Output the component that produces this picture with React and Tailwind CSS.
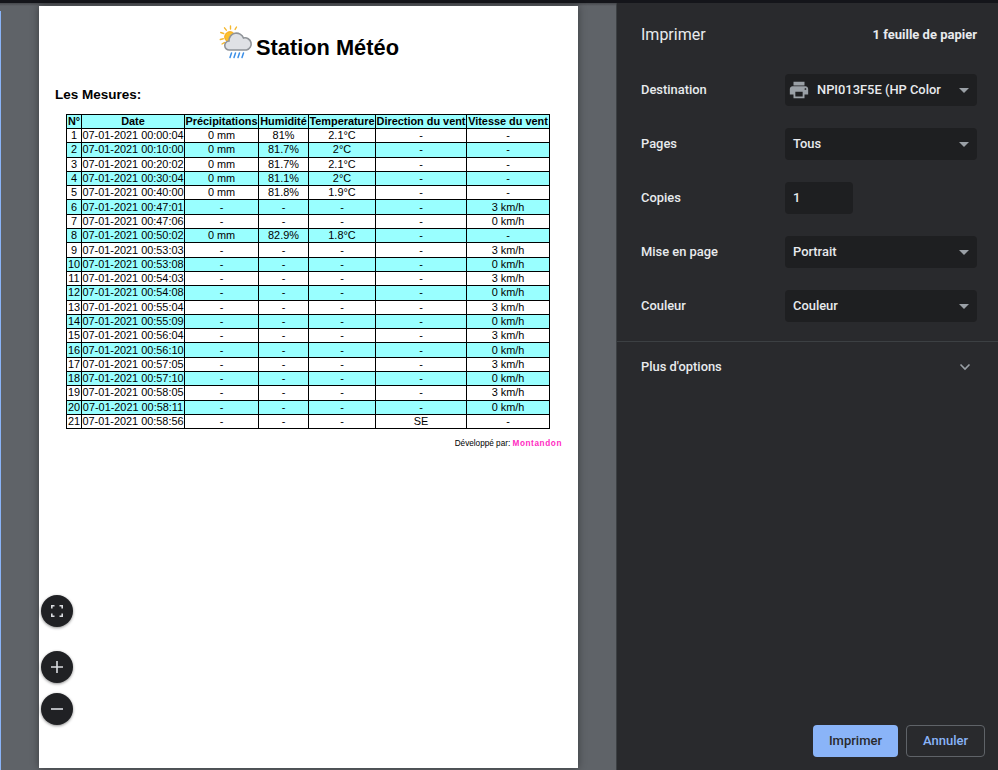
const rows = [
["07-01-2021 00:00:04","0 mm","81%","2.1°C","-","-"],
["07-01-2021 00:10:00","0 mm","81.7%","2°C","-","-"],
["07-01-2021 00:20:02","0 mm","81.7%","2.1°C","-","-"],
["07-01-2021 00:30:04","0 mm","81.1%","2°C","-","-"],
["07-01-2021 00:40:00","0 mm","81.8%","1.9°C","-","-"],
["07-01-2021 00:47:01","-","-","-","-","3 km/h"],
["07-01-2021 00:47:06","-","-","-","-","0 km/h"],
["07-01-2021 00:50:02","0 mm","82.9%","1.8°C","-","-"],
["07-01-2021 00:53:03","-","-","-","-","3 km/h"],
["07-01-2021 00:53:08","-","-","-","-","0 km/h"],
["07-01-2021 00:54:03","-","-","-","-","3 km/h"],
["07-01-2021 00:54:08","-","-","-","-","0 km/h"],
["07-01-2021 00:55:04","-","-","-","-","3 km/h"],
["07-01-2021 00:55:09","-","-","-","-","0 km/h"],
["07-01-2021 00:56:04","-","-","-","-","3 km/h"],
["07-01-2021 00:56:10","-","-","-","-","0 km/h"],
["07-01-2021 00:57:05","-","-","-","-","3 km/h"],
["07-01-2021 00:57:10","-","-","-","-","0 km/h"],
["07-01-2021 00:58:05","-","-","-","-","3 km/h"],
["07-01-2021 00:58:11","-","-","-","-","0 km/h"],
["07-01-2021 00:58:56","-","-","-","SE","-"],
];
const heads = ["N°","Date","Précipitations","Humidité","Temperature","Direction du vent","Vitesse du vent"];
const widths = ["w-[15px]","w-[103px]","w-[74px]","w-[50px]","w-[67px]","w-[91px]","w-[83px]"];

function WeatherIcon() {
  return (
    <svg width="36" height="36" viewBox="-1.5 0 36 36" className="shrink-0 mt-px">
      <g stroke="#f5b82e" strokeWidth="1.4" strokeLinecap="round">
        <path d="M11 2v3M5 3.8l1.8 2.4M17 3l-1.4 2.4M1.2 8.5l3 1M.8 15.5l3-.8M2.5 20l2.4-1.4" />
      </g>
      <circle cx="10.5" cy="13" r="5.4" fill="#fbc02d" stroke="#f59e0b" strokeWidth="0.8" />
      <path d="M10 26a4.5 4.5 0 0 1-.5-9A7.5 7.5 0 0 1 24 14a6 6 0 0 1 3 12z" fill="#dfe1e5" stroke="#8f9398" strokeWidth="1.6" />
      <g stroke="#3b8fe8" strokeWidth="1.5" strokeLinecap="round">
        <path d="M12 29l-1.5 4.5M16 29l-1.5 4.5M20 29l-1.5 4.5M24 29l-1.5 4.5" />
      </g>
    </svg>
  );
}

function Caret() {
  return <span className="w-0 h-0 border-l-[5px] border-r-[5px] border-t-[5px] border-l-transparent border-r-transparent border-t-[#9aa0a6]" />;
}

function Row({ label, children }) {
  return (
    <div className="flex items-center h-[32px] mb-[22px] pl-[24px] pr-[21px]">
      <div className="w-[144px] text-[12.9px] font-medium text-[#e8eaed]">{label}</div>
      {children}
    </div>
  );
}

function Select({ children }) {
  return (
    <div className="flex-1 h-[32px] bg-[#1e1f21] rounded-[4px] flex items-center justify-between pl-[8px] pr-[8px] text-[12.9px] font-medium text-[#e8eaed]">
      <div className="flex items-center min-w-0">{children}</div>
      <Caret />
    </div>
  );
}

function Fab({ children, className = "" }) {
  return (
    <button className={`w-[32px] h-[32px] rounded-full bg-[#202124] flex items-center justify-center shadow-[0_1px_3px_rgba(0,0,0,0.45)] ${className}`}>
      {children}
    </button>
  );
}

export default function App() {
  return (
    <div className="w-[998px] h-[770px] overflow-hidden flex flex-col bg-[#14151a] [font-family:Roboto,sans-serif]">
      <div className="h-[3px] shrink-0 bg-[#14151a]" />
      <div className="flex-1 flex min-h-0">
        <div className="relative w-[616px] shrink-0 bg-[#5f6368] border-l border-[#5f6368] flex">
          <div className="absolute left-[-1px] top-[8px] bottom-0 w-px bg-[#8ab4f8]" />
          <div className="absolute left-[-1px] right-0 top-0 h-[3px] bg-gradient-to-b from-[#45474b] to-[#5f6368]" />
          <div className="relative ml-[38px] mt-[3px] w-[539px] h-[762px] bg-white shadow-[0_0_8px_rgba(0,0,0,0.4)] [font-family:'Liberation_Sans',Arial,sans-serif] text-black">
            <div className="flex items-start justify-center mt-[17px]">
              <WeatherIcon />
              <span className="text-[21.8px] leading-[26px] font-bold ml-[2px] mt-[12px]">Station Météo</span>
            </div>
            <div className="mt-[26px] ml-[16px] text-[13.5px] leading-[16px] font-bold">Les Mesures:</div>
            <table className="mt-[11px] ml-[27px] w-[483px] table-fixed border-collapse border border-black text-[10.9px] leading-[13px]">
              <colgroup>
                {widths.map((w, i) => <col key={i} className={w} />)}
              </colgroup>
              <thead>
                <tr className="bg-[#99ffff] h-[14px]">
                  {heads.map((h) => <th key={h} className="border border-black p-0 text-center font-bold whitespace-nowrap overflow-hidden">{h}</th>)}
                </tr>
              </thead>
              <tbody>
                {rows.map((r, i) => (
                  <tr key={i} className={i % 2 ? "bg-[#99ffff] h-[14.3px]" : "bg-white h-[14.3px]"}>
                    <td className="border border-black p-0 text-center">{i + 1}</td>
                    {r.map((c, j) => <td key={j} className="border border-black p-0 text-center whitespace-nowrap">{c}</td>)}
                  </tr>
                ))}
              </tbody>
            </table>
            <div className="absolute right-[16px] top-[433px] text-[8.2px] leading-[10px] whitespace-nowrap">
              Développé par: <span className="font-bold text-[#ff2bc2] tracking-[0.6px]">Montandon</span>
            </div>
          </div>
          <div className="absolute left-[40px] top-[592px] flex flex-col">
            <Fab>
              <svg width="14" height="14" viewBox="0 0 14 14" fill="none" stroke="#dadce0" strokeWidth="1.6">
                <path d="M1.8 4.5V1.8h2.7M9.5 1.8h2.7v2.7M12.2 9.5v2.7H9.5M4.5 12.2H1.8V9.5" />
              </svg>
            </Fab>
            <Fab className="mt-[24px]">
              <svg width="14" height="14" viewBox="0 0 14 14" fill="none" stroke="#dadce0" strokeWidth="1.6">
                <path d="M7 1v12M1 7h12" />
              </svg>
            </Fab>
            <Fab className="mt-[10px]">
              <svg width="14" height="14" viewBox="0 0 14 14" fill="none" stroke="#dadce0" strokeWidth="1.6">
                <path d="M1 7h12" />
              </svg>
            </Fab>
          </div>
        </div>
        <div className="flex-1 bg-[#292a2d] border-l border-[#3c4043] flex flex-col text-[#e8eaed]">
          <div className="flex items-center justify-between pl-[24px] pr-[21px] h-[44px] mt-[10px]">
            <span className="text-[16px] text-[#e8eaed]">Imprimer</span>
            <span className="text-[13px] font-bold text-[#e8eaed]">1 feuille de papier</span>
          </div>
          <div className="mt-[17px]">
            <Row label="Destination">
              <Select>
                <svg width="22" height="22" viewBox="0 0 24 24" fill="#9aa0a6" className="-ml-[5px] mr-[7px]">
                  <path d="M19 8H5c-1.66 0-3 1.34-3 3v6h4v4h12v-4h4v-6c0-1.66-1.34-3-3-3zm-3 11H8v-5h8v5zm3-7c-.55 0-1-.45-1-1s.45-1 1-1 1 .45 1 1-.45 1-1 1zm-1-9H6v4h12V3z" />
                </svg>
                <span className="whitespace-nowrap">NPI013F5E (HP Color</span>
              </Select>
            </Row>
            <Row label="Pages"><Select>Tous</Select></Row>
            <Row label="Copies">
              <div className="w-[68px] h-[32px] bg-[#1e1f21] rounded-[4px] flex items-center pl-[8px] text-[13px] font-medium">1</div>
            </Row>
            <Row label="Mise en page"><Select>Portrait</Select></Row>
            <Row label="Couleur"><Select>Couleur</Select></Row>
          </div>
          <div className="border-t border-[#3c4043] mt-[-3px] h-[50px] flex items-center justify-between pl-[24px] pr-[27px]">
            <span className="text-[12.9px] font-medium">Plus d'options</span>
            <svg width="12" height="8" viewBox="0 0 12 8" fill="none" stroke="#9aa0a6" strokeWidth="1.6"><path d="M1.5 1.5L6 6l4.5-4.5" /></svg>
          </div>
          <div className="flex-1" />
          <div className="flex justify-end gap-[8px] pr-[13px] pb-[13px]">
            <button className="w-[85px] h-[32px] rounded-[4px] bg-[#8ab4f8] text-[#292a2d] text-[13px] font-medium">Imprimer</button>
            <button className="w-[79px] h-[32px] rounded-[4px] border border-[#5f6368] text-[#8ab4f8] text-[13px] font-medium">Annuler</button>
          </div>
        </div>
      </div>
    </div>
  );
}
